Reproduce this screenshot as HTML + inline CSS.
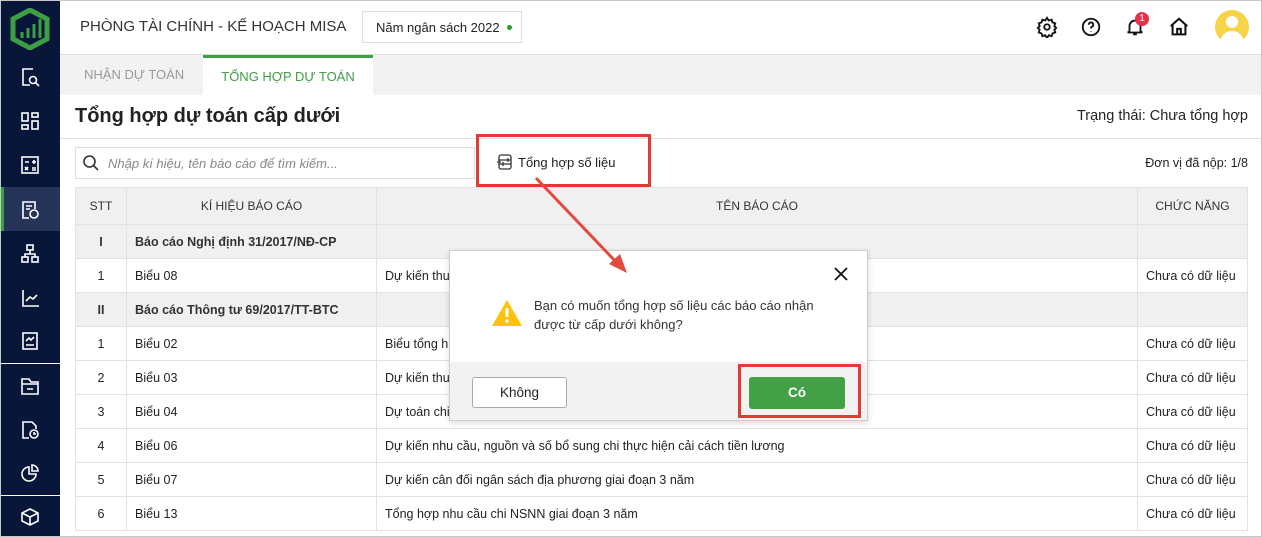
<!DOCTYPE html>
<html><head><meta charset="utf-8"><style>
*{box-sizing:border-box;margin:0;padding:0}
body{width:1262px;height:537px;overflow:hidden;font-family:"Liberation Sans",sans-serif;background:#fff;position:relative;color:#222;font-size:13px}
.abs{position:absolute}
.side{left:0;top:0;width:60px;height:537px;background:#071639}
.ic{position:absolute;left:19px;width:22px;height:22px}
.ic svg{width:22px;height:22px;stroke:#fff;fill:none;stroke-width:1.6}
table{position:absolute;left:75px;top:187px;border-collapse:collapse;font-size:12.5px}
td{border:1px solid #e2e2e2;height:34px;padding:0 8px;color:#222}
tr.h td{background:#f0f0f0;height:37px;text-align:center;font-size:12px;color:#333}
tr.g td{background:#f0f0f0;font-weight:bold;color:#333}
td.c{text-align:center}
</style></head><body>
<div class="abs" style="inset:0;border:1px solid #c8c8c8;z-index:9;pointer-events:none"></div>
<div class="abs side">
 <svg class="abs" style="left:10px;top:8px" width="40" height="42" viewBox="0 0 40 42"><path d="M20 2 L37 11 V31 L20 40 L3 31 V11 Z" fill="none" stroke="#3e9e44" stroke-width="5"/><path d="M12 30V24M18 30V20M24 30V16M30 30V11" stroke="#3e9e44" stroke-width="3"/></svg>
 <div class="ic" style="top:66px"><svg viewBox="0 0 22 22"><path d="M14 3H4v16h7"/><circle cx="14" cy="14" r="3.5"/><path d="M16.5 16.5 20 20"/></svg></div>
 <div class="ic" style="top:110px"><svg viewBox="0 0 22 22"><rect x="3" y="3" width="6" height="8"/><rect x="13" y="3" width="6" height="4"/><rect x="3" y="15" width="6" height="4"/><rect x="13" y="11" width="6" height="8"/></svg></div>
 <div class="ic" style="top:154px"><svg viewBox="0 0 22 22"><rect x="3" y="3" width="16" height="16"/><path d="M6 8h4M13 8h4M15 6v4M6 13l3 3M9 13l-3 3M13 14h4M13 16h4"/></svg></div>
 <div class="abs" style="left:0;top:187px;width:60px;height:44px;background:#26345a;border-left:4px solid #3e9e44"></div>
 <div class="ic" style="top:199px"><svg viewBox="0 0 22 22"><path d="M10 19H4V3h12v7M7 7h6M7 10h4"/><circle cx="15" cy="15" r="4"/></svg></div>
 <div class="ic" style="top:242px"><svg viewBox="0 0 22 22"><rect x="8" y="3" width="6" height="5"/><rect x="3" y="15" width="6" height="5"/><rect x="13" y="15" width="6" height="5"/><path d="M11 8v4M6 15v-3h10v3"/></svg></div>
 <div class="ic" style="top:287px"><svg viewBox="0 0 22 22"><path d="M4 3v16h16M7 14l4-4 3 2 4-4"/></svg></div>
 <div class="ic" style="top:330px"><svg viewBox="0 0 22 22"><rect x="4" y="3" width="14" height="16"/><path d="M7 15h8M7 11l3-3 2 2 3-3"/></svg></div>
 <div class="abs" style="left:0;top:363px;width:60px;height:1px;background:#fff"></div>
 <div class="ic" style="top:375px"><svg viewBox="0 0 22 22"><path d="M3 4h7l2 3h7v12H3zM3 9h16M8 14h6"/></svg></div>
 <div class="ic" style="top:419px"><svg viewBox="0 0 22 22"><path d="M10 19H4V3h9l4 4v3"/><circle cx="15" cy="15" r="4"/><path d="M15 13v2h2"/></svg></div>
 <div class="ic" style="top:462px"><svg viewBox="0 0 22 22"><path d="M10 5a7 7 0 1 0 7 7h-7z"/><path d="M13 3v6h6a6 6 0 0 0-6-6z"/></svg></div>
 <div class="abs" style="left:0;top:495px;width:60px;height:1px;background:#fff"></div>
 <div class="ic" style="top:506px"><svg viewBox="0 0 22 22"><path d="M11 3l8 4v8l-8 4-8-4V7zM3 7l8 4 8-4M11 11v8"/></svg></div>
</div>
<div class="abs" style="left:80px;top:18px;font-size:15px;color:#333">PHÒNG TÀI CHÍNH - KẾ HOẠCH MISA</div>
<div class="abs" style="left:362px;top:11px;width:160px;height:32px;border:1px solid #ddd;font-size:13px;padding:8px 0 0 13px;color:#222">Năm ngân sách 2022 <span style="display:inline-block;width:5px;height:5px;border-radius:50%;background:#2a9d2a;margin-left:4px;vertical-align:2px"></span></div>
<svg class="abs" style="left:1036px;top:16px" width="22" height="22" viewBox="0 0 24 24" fill="none" stroke="#111" stroke-width="2"><circle cx="12" cy="12" r="3"/><path d="M12 2l2 3 3-1 1 3 3 1-1 3 2 2-2 2 1 3-3 1-1 3-3-1-2 3-2-3-3 1-1-3-3-1 1-3-2-2 2-2-1-3 3-1 1-3 3 1z"/></svg>
<svg class="abs" style="left:1080px;top:16px" width="22" height="22" viewBox="0 0 24 24" fill="none" stroke="#111" stroke-width="2"><circle cx="12" cy="12" r="9"/><path d="M9.5 9.5a2.5 2.5 0 1 1 3.5 2.3c-.7.3-1 .9-1 1.7M12 16.5v.5"/></svg>
<svg class="abs" style="left:1124px;top:16px" width="22" height="22" viewBox="0 0 24 24" fill="none" stroke="#111" stroke-width="2"><path d="M6 17V11a6 6 0 0 1 12 0v6l2 1H4zM10 20h4"/></svg>
<div class="abs" style="left:1135px;top:12px;width:14px;height:14px;border-radius:50%;background:#e8304a;color:#fff;font-size:10px;text-align:center;line-height:14px">1</div>
<svg class="abs" style="left:1168px;top:16px" width="22" height="22" viewBox="0 0 24 24" fill="none" stroke="#111" stroke-width="2.2"><path d="M3 11l9-8 9 8M5 9v11h14V9M10 20v-6h4v6"/></svg>
<div class="abs" style="left:1215px;top:10px;width:34px;height:34px;border-radius:50%;background:#f5d44a;overflow:hidden"><div class="abs" style="left:11px;top:6px;width:12px;height:12px;border-radius:50%;background:#fff"></div><div class="abs" style="left:5px;top:21px;width:24px;height:18px;border-radius:12px 12px 0 0;background:#fff"></div></div>
<div class="abs" style="left:60px;top:54px;width:1201px;height:41px;background:#f2f2f2;border-top:1px solid #ddd"></div>
<div class="abs" style="left:84px;top:67px;font-size:13px;color:#999">NHẬN DỰ TOÁN</div>
<div class="abs" style="left:203px;top:55px;width:170px;height:40px;background:#fff;border-top:3px solid #3e9e44;text-align:center;padding-top:11px;color:#3e9e44;font-size:13px">TỔNG HỢP DỰ TOÁN</div>
<div class="abs" style="left:75px;top:105px;font-size:20px;font-weight:bold;color:#222">Tổng hợp dự toán cấp dưới</div>
<div class="abs" style="right:14px;top:108px;font-size:14.5px;color:#222">Trạng thái: Chưa tổng hợp</div>
<div class="abs" style="left:60px;top:138px;width:1202px;height:1px;background:#e0e0e0"></div>
<div class="abs" style="left:75px;top:147px;width:400px;height:32px;border:1px solid #ddd"></div>
<svg class="abs" style="left:82px;top:154px" width="18" height="18" viewBox="0 0 18 18" fill="none" stroke="#333" stroke-width="1.6"><circle cx="7.5" cy="7.5" r="5.5"/><path d="M11.5 11.5 16 16"/></svg>
<div class="abs" style="left:108px;top:156px;font-size:13px;font-style:italic;color:#888">Nhập kí hiệu, tên báo cáo để tìm kiếm...</div>
<svg class="abs" style="left:496px;top:153px" width="17" height="17" viewBox="0 0 17 17" fill="none" stroke="#333" stroke-width="1.3"><rect x="3" y="2" width="12" height="14" rx="2"/><path d="M3 7h12M3 11h12M1 9h4M12 5v4M7 9v4"/></svg>
<div class="abs" style="left:518px;top:155px;font-size:13px;color:#222">Tổng hợp số liệu</div>
<div class="abs" style="right:14px;top:156px;font-size:12.5px;color:#222">Đơn vị đã nộp: 1/8</div>
<table>
<tr class="h"><td style="width:51px">STT</td><td style="width:250px">KÍ HIỆU BÁO CÁO</td><td style="width:761px">TÊN BÁO CÁO</td><td style="width:110px">CHỨC NĂNG</td></tr>
<tr class="g"><td class="c">I</td><td>Báo cáo Nghị định 31/2017/NĐ-CP</td><td></td><td></td></tr>
<tr><td class="c">1</td><td>Biểu 08</td><td>Dự kiến thu</td><td>Chưa có dữ liệu</td></tr>
<tr class="g"><td class="c">II</td><td>Báo cáo Thông tư 69/2017/TT-BTC</td><td></td><td></td></tr>
<tr><td class="c">1</td><td>Biểu 02</td><td>Biểu tổng h</td><td>Chưa có dữ liệu</td></tr>
<tr><td class="c">2</td><td>Biểu 03</td><td>Dự kiến thu</td><td>Chưa có dữ liệu</td></tr>
<tr><td class="c">3</td><td>Biểu 04</td><td>Dự toán chi</td><td>Chưa có dữ liệu</td></tr>
<tr><td class="c">4</td><td>Biểu 06</td><td>Dự kiến nhu cầu, nguồn và số bổ sung chi thực hiện cải cách tiền lương</td><td>Chưa có dữ liệu</td></tr>
<tr><td class="c">5</td><td>Biểu 07</td><td>Dự kiến cân đối ngân sách địa phương giai đoạn 3 năm</td><td>Chưa có dữ liệu</td></tr>
<tr><td class="c">6</td><td>Biểu 13</td><td>Tổng hợp nhu cầu chi NSNN giai đoạn 3 năm</td><td>Chưa có dữ liệu</td></tr>
</table>
<div class="abs" style="left:449px;top:250px;width:419px;height:171px;background:#fff;border:1px solid #ccc;box-shadow:0 2px 6px rgba(0,0,0,.15)">
 <svg class="abs" style="left:383px;top:15px" width="16" height="16" viewBox="0 0 16 16" stroke="#111" stroke-width="1.8"><path d="M2 2l12 12M14 2 2 14"/></svg>
 <svg class="abs" style="left:41px;top:48px" width="32" height="28" viewBox="0 0 32 28"><path d="M16 1 31 27H1z" fill="#fdc20a"/><path d="M16 9v9" stroke="#fff" stroke-width="3"/><circle cx="16" cy="22" r="1.7" fill="#fff"/></svg>
 <div class="abs" style="left:84px;top:45px;font-size:13px;line-height:19px;color:#333;width:300px">Bạn có muốn tổng hợp số liệu các báo cáo nhận được từ cấp dưới không?</div>
 <div class="abs" style="left:0;top:111px;width:417px;height:58px;background:#f2f2f2"></div>
 <div class="abs" style="left:22px;top:126px;width:95px;height:31px;background:#fff;border:1px solid #aaa;border-radius:3px;text-align:center;line-height:29px;font-size:13.5px;color:#222">Không</div>
 <div class="abs" style="left:299px;top:126px;width:96px;height:32px;background:#43a047;border-radius:3px;text-align:center;line-height:32px;font-size:13.5px;font-weight:bold;color:#fff">Có</div>
</div>
<div class="abs" style="left:476px;top:134px;width:175px;height:53px;border:3px solid #e53935"></div>
<div class="abs" style="left:738px;top:364px;width:123px;height:54px;border:3px solid #e53935"></div>
<svg class="abs" style="left:0;top:0" width="1262" height="537"><line x1="536" y1="178" x2="618" y2="264" stroke="#e04a3f" stroke-width="3"/><path d="M627 273 L609 264 L620 254 Z" fill="#e04a3f"/></svg>
</body></html>
